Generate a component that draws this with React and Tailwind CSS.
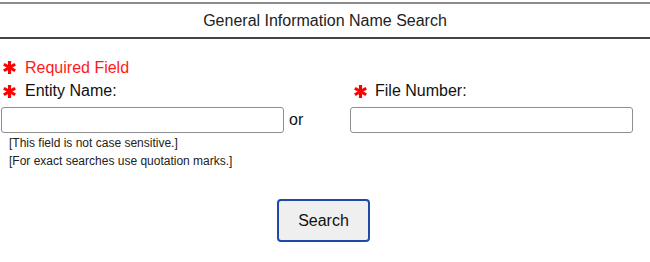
import React from 'react';

const Star = () => (
  <svg width="13" height="13" viewBox="0 0 14 14" className="shrink-0">
    <g stroke="#ff0000" strokeWidth="3.4">
      <line x1="7" y1="0" x2="7" y2="14" />
      <line x1="7" y1="0" x2="7" y2="14" transform="rotate(60 7 7)" />
      <line x1="7" y1="0" x2="7" y2="14" transform="rotate(-60 7 7)" />
    </g>
  </svg>
);

export default function App() {
  return (
    <div className="w-[650px] h-[262px] bg-white font-['Liberation_Sans',Arial,sans-serif] text-[#111]">
      {/* Header */}
      <div className="pt-[2px]">
        <div className="h-[37px] border-t-2 border-b-2 border-t-[#8c8c8c] border-b-[#444] flex items-center justify-center text-[16px] text-[#222]">
          General Information Name Search
        </div>
      </div>

      {/* Form */}
      <div className="mt-[17px]">
        <div className="flex items-center gap-[9px] pl-[3px] h-[23px] text-[16px] text-[#ff1a1a]">
          <Star />
          <span>Required Field</span>
        </div>

        <div className="grid grid-cols-[350px_1fr] h-[23px] text-[16px]">
          <div className="flex items-center gap-[9px] pl-[3px]">
            <Star />
            <span>Entity Name:</span>
          </div>
          <div className="flex items-center gap-[8px] pl-[4px]">
            <Star />
            <span>File Number:</span>
          </div>
        </div>

        <div className="grid grid-cols-[350px_1fr] mt-[5px]">
          <div className="flex items-center pl-[1px]">
            <input type="text" className="w-[283px] h-[26px] border border-[#8f8f8f] rounded-[3px] px-1 outline-none" />
            <span className="ml-[5px] text-[16px]">or</span>
          </div>
          <div>
            <input type="text" className="w-[283px] h-[26px] border border-[#8f8f8f] rounded-[3px] px-1 outline-none" />
          </div>
        </div>

        <div className="pl-[9px] mt-[1px] text-[12px] leading-[18px] text-[#222]">
          <p>[This field is not case sensitive.]</p>
          <p>[For exact searches use quotation marks.]</p>
        </div>

        <div className="flex justify-center pr-[3px] mt-[29px]">
          <button className="w-[93px] h-[43px] bg-[#efefef] border-2 border-[#1d4aa6] rounded-[4px] text-[16px] text-[#111]">
            Search
          </button>
        </div>
      </div>
    </div>
  );
}
